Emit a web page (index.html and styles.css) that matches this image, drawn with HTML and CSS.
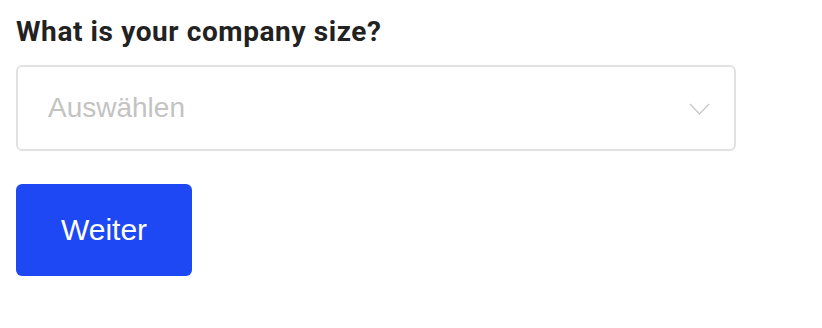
FILE: index.html
```html
<!DOCTYPE html>
<html lang="en">
<head>
    <meta charset="UTF-8">
    <meta name="viewport" content="width=device-width, initial-scale=1.0">
    <title>Company Size</title>
    <link rel="stylesheet" href="styles.css">
</head>
<body>
    <div class="form">
        <label class="question" for="size">What is your company size?</label>
        <div class="select">
            <span class="placeholder">Auswählen</span>
            <svg class="chevron" width="21" height="12" viewBox="0 0 21 12">
                <path d="M1 1 L10.5 11 L20 1" fill="none" stroke="#c8c8c8" stroke-width="1.3"/>
            </svg>
        </div>
        <button class="next">Weiter</button>
    </div>
</body>
</html>
```

FILE: styles.css
```css
body {
    margin: 0;
    background-color: #fff;
    font-family: "Liberation Sans", Arial, sans-serif;
}
.form {
    padding: 16px 16px;
    display: flex;
    flex-direction: column;
    align-items: flex-start;
}
.question {
    font-family: Roboto, sans-serif;
    font-weight: 700;
    font-size: 28px;
    letter-spacing: 0.6px;
    color: #222;
    line-height: 32px;
}
.select {
    margin-top: 17px;
    box-sizing: border-box;
    width: 720px;
    height: 86px;
    border: 2px solid #e1e1e1;
    border-radius: 6px;
    display: flex;
    align-items: center;
    justify-content: space-between;
    padding: 0 24px 0 30px;
}
.placeholder {
    font-size: 28px;
    color: #c3c3c3;
}
.chevron {
    margin-top: 2px;
}
.next {
    margin-top: 33px;
    width: 176px;
    height: 92px;
    border: none;
    border-radius: 6px;
    background-color: #1f48f5;
    color: #fff;
    font-family: "Liberation Sans", Arial, sans-serif;
    font-size: 30px;
    cursor: pointer;
}
```
